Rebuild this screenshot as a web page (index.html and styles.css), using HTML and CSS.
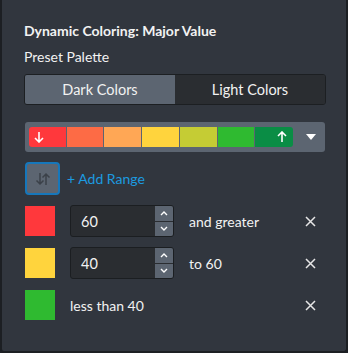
FILE: index.html
```html
<!DOCTYPE html>
<html>
<head>
<meta charset="utf-8">
<link rel="stylesheet" href="styles.css">
</head>
<body>
<div class="panel">
  <div class="title">Dynamic Coloring: Major Value</div>
  <div class="label">Preset Palette</div>
  <div class="seg">
    <div class="seg-btn active">Dark Colors</div>
    <div class="seg-btn">Light Colors</div>
  </div>
  <div class="palette">
    <div class="swatches">
      <div class="sw" style="background:#ff383c">
        <svg width="10" height="12" viewBox="0 0 10 12"><path d="M5 1v10M1 7l4 4 4-4" fill="none" stroke="#fff" stroke-width="1.6"/></svg>
      </div>
      <div class="sw" style="background:#fd6b45"></div>
      <div class="sw" style="background:#ffa755"></div>
      <div class="sw" style="background:#ffd43d"></div>
      <div class="sw" style="background:#c5cc34"></div>
      <div class="sw" style="background:#2fba30"></div>
      <div class="sw last" style="background:#0a8d45">
        <svg width="10" height="12" viewBox="0 0 10 12"><path d="M5 11V1M1 5l4-4 4 4" fill="none" stroke="#fff" stroke-width="1.6"/></svg>
      </div>
    </div>
    <div class="caret">
      <svg width="10" height="6" viewBox="0 0 10 6"><path d="M0 0h10L5 6z" fill="#fff"/></svg>
    </div>
  </div>
  <div class="tools">
    <div class="sort-btn">
      <svg width="16" height="14" viewBox="0 0 16 14"><path d="M5 1v11M1.5 8.5 5 12l3.5-3.5M11 13V2M7.5 5.5 11 2l3.5 3.5" fill="none" stroke="#3b4149" stroke-width="1.5"/></svg>
    </div>
    <div class="add">+ Add Range</div>
  </div>
  <div class="row">
    <div class="color" style="background:#ff383c"></div>
    <div class="num">
      <div class="num-val">60</div>
      <div class="spin">
        <div class="spin-btn"><svg width="8" height="5" viewBox="0 0 8 5"><path d="M1 4l3-3 3 3" fill="none" stroke="#fff" stroke-width="1.4"/></svg></div>
        <div class="spin-btn"><svg width="8" height="5" viewBox="0 0 8 5"><path d="M1 1l3 3 3-3" fill="none" stroke="#fff" stroke-width="1.4"/></svg></div>
      </div>
    </div>
    <div class="desc">and greater</div>
    <div class="close"><svg width="11" height="11" viewBox="0 0 11 11"><path d="M1 1l9 9M10 1l-9 9" stroke="#e6e6e6" stroke-width="1.5"/></svg></div>
  </div>
  <div class="row">
    <div class="color" style="background:#ffd43d"></div>
    <div class="num">
      <div class="num-val">40</div>
      <div class="spin">
        <div class="spin-btn"><svg width="8" height="5" viewBox="0 0 8 5"><path d="M1 4l3-3 3 3" fill="none" stroke="#fff" stroke-width="1.4"/></svg></div>
        <div class="spin-btn"><svg width="8" height="5" viewBox="0 0 8 5"><path d="M1 1l3 3 3-3" fill="none" stroke="#fff" stroke-width="1.4"/></svg></div>
      </div>
    </div>
    <div class="desc">to 60</div>
    <div class="close"><svg width="11" height="11" viewBox="0 0 11 11"><path d="M1 1l9 9M10 1l-9 9" stroke="#e6e6e6" stroke-width="1.5"/></svg></div>
  </div>
  <div class="row">
    <div class="color" style="background:#2fba30"></div>
    <div class="desc">less than 40</div>
    <div class="close"><svg width="11" height="11" viewBox="0 0 11 11"><path d="M1 1l9 9M10 1l-9 9" stroke="#e6e6e6" stroke-width="1.5"/></svg></div>
  </div>
</div>
</body>
</html>
```

FILE: styles.css
```css
html, body {
  margin: 0;
  padding: 0;
  background: #1e2126;
}
.panel {
  width: 348px;
  height: 353px;
  box-sizing: border-box;
  background: #31363e;
  border-left: 2px solid #1c1f23;
  border-right: 2px solid #1c1f23;
  border-bottom: 2px solid #1c1f23;
  border-radius: 0 0 4px 4px;
  padding: 23px 20px 0 22px;
  font-family: Lato, "Open Sans", sans-serif;
  color: #f2f2f2;
  font-size: 14px;
  display: flex;
  flex-direction: column;
}
.title {
  font-weight: 700;
  line-height: 16px;
}
.label {
  margin-top: 10px;
  line-height: 16px;
}
.seg {
  margin-top: 9px;
  display: flex;
  height: 31px;
  width: 302px;
  box-sizing: border-box;
  border: 1px solid #1c1f22;
  border-radius: 3px;
  overflow: hidden;
}
.seg-btn {
  flex: 1;
  display: flex;
  align-items: center;
  justify-content: center;
  background: #2a2d31;
  font-size: 14.5px;
}
.seg-btn.active {
  background: #5c6571;
}
.palette {
  margin-top: 17px;
  margin-left: 1px;
  width: 300px;
  height: 30px;
  box-sizing: border-box;
  background: #5c6571;
  border-radius: 3px;
  padding: 5px 4px;
  display: flex;
  align-items: center;
}
.swatches {
  display: flex;
  width: 264px;
  height: 20px;
  gap: 1px;
  border-radius: 3px;
  overflow: hidden;
}
.sw {
  flex: 1;
  display: flex;
  align-items: center;
  padding-left: 5px;
}
.sw.last {
  justify-content: flex-end;
  padding: 0 6px 0 0;
}
.caret {
  flex: 1;
  display: flex;
  justify-content: center;
  align-items: center;
  padding-left: 8px;
}
.tools {
  margin-top: 10px;
  display: flex;
  align-items: center;
}
.sort-btn {
  margin-left: 1px;
  width: 35px;
  height: 33px;
  box-sizing: border-box;
  border: 2px solid #1677bb;
  border-radius: 4px;
  background: #5c6571;
  display: flex;
  align-items: center;
  justify-content: center;
}
.add {
  margin-left: 7px;
  color: #1c9be0;
  font-size: 14px;
}
.row {
  margin-top: 10px;
  height: 32px;
  display: flex;
  align-items: center;
}
.color {
  width: 30px;
  height: 30px;
  margin-left: 1px;
}
.num {
  margin-left: 15px;
  width: 104px;
  height: 32px;
  box-sizing: border-box;
  border: 1px solid #1b1e21;
  border-radius: 3px;
  background: #2a2d31;
  display: flex;
  overflow: hidden;
}
.num-val {
  flex: 1;
  display: flex;
  align-items: center;
  padding-left: 10px;
  font-size: 14.5px;
}
.spin {
  width: 18px;
  display: flex;
  flex-direction: column;
  gap: 1px;
  background: #2a2d31;
}
.spin-btn {
  flex: 1;
  background: #5c6571;
  display: flex;
  align-items: center;
  justify-content: center;
}
.desc {
  margin-left: 15px;
  flex: 1;
  font-size: 14px;
}
.close {
  width: 20px;
  margin-right: 6px;
  display: flex;
  justify-content: center;
}
```
